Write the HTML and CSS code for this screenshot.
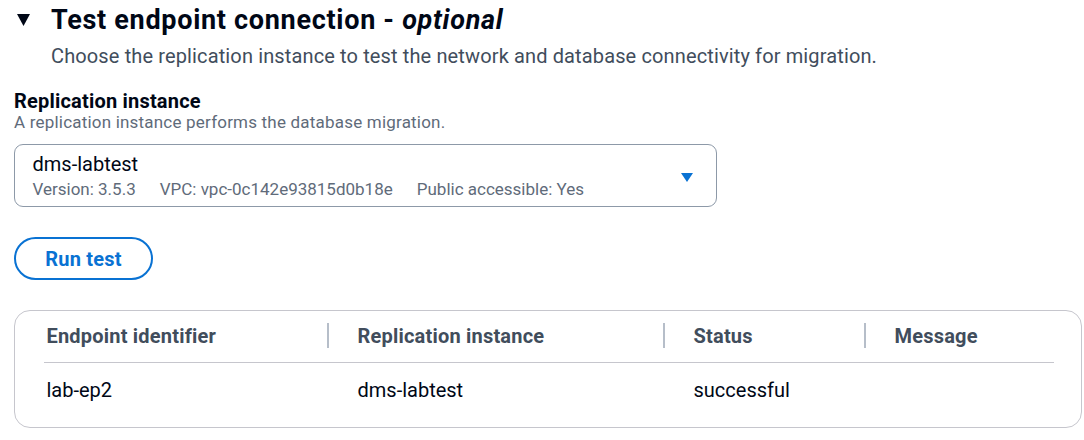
FILE: index.html
```html
<!DOCTYPE html>
<html lang="en">
<head>
<meta charset="utf-8">
<title>Test endpoint connection</title>
<link rel="stylesheet" href="styles.css">
</head>
<body>
<main class="page">
  <section class="section">
    <header class="section-header">
      <svg class="expand-caret" width="13" height="12" viewBox="0 0 13 12" aria-hidden="true"><polygon points="0,0 13,0 6.5,12" fill="#000716"/></svg>
      <h2 class="section-title">Test endpoint connection - <i>optional</i></h2>
    </header>
    <p class="section-desc">Choose the replication instance to test the network and database connectivity for migration.</p>

    <div class="field">
      <div class="field-label">Replication instance</div>
      <div class="field-help">A replication instance performs the database migration.</div>
      <div class="select">
        <div class="select-body">
          <div class="select-value">dms-labtest</div>
          <div class="select-meta">
            <span>Version: 3.5.3</span>
            <span>VPC: vpc-0c142e93815d0b18e</span>
            <span>Public accessible: Yes</span>
          </div>
        </div>
        <svg class="select-caret" width="12" height="9" viewBox="0 0 12 9" aria-hidden="true"><polygon points="0,0 12,0 6,9" fill="#0972d3"/></svg>
      </div>
    </div>

    <button class="btn" type="button">Run test</button>

    <div class="table">
      <div class="table-row table-head">
        <div class="cell">Endpoint identifier</div>
        <div class="cell sep">Replication instance</div>
        <div class="cell sep">Status</div>
        <div class="cell sep">Message</div>
      </div>
      <div class="table-row table-body">
        <div class="cell">lab-ep2</div>
        <div class="cell">dms-labtest</div>
        <div class="cell">successful</div>
        <div class="cell"></div>
      </div>
    </div>
  </section>
</main>
</body>
</html>
```

FILE: styles.css
```css
* { box-sizing: border-box; }

html, body {
  margin: 0;
  padding: 0;
  background: #ffffff;
}

body {
  font-family: Roboto, "Liberation Sans", Arial, sans-serif;
  color: #000716;
  width: 1084px;
  height: 440px;
  overflow: hidden;
}

.page {
  padding: 4px 2px 0 14px;
}

.section-header {
  display: flex;
  align-items: center;
  gap: 21px;
  height: 32px;
  padding-left: 3px;
}

.expand-caret {
  flex: none;
  margin-top: -1px;
}

.section-title {
  margin: 0;
  font-size: 27px;
  line-height: 32px;
  font-weight: 700;
  letter-spacing: 0.7px;
  color: #000716;
}

.section-title i {
  font-style: italic;
}

.section-desc {
  margin: 6px 0 0 37px;
  font-size: 20px;
  line-height: 28px;
  letter-spacing: 0.13px;
  color: #414d5c;
}

.field {
  margin-top: 20px;
}

.field-label {
  font-size: 20px;
  line-height: 22px;
  font-weight: 700;
  letter-spacing: 0.2px;
  color: #000716;
}

.field-help {
  font-size: 17px;
  line-height: 20px;
  letter-spacing: 0.2px;
  color: #5f6b7a;
}

.select {
  margin-top: 12px;
  width: 703px;
  height: 63px;
  border: 1.5px solid #8d99a8;
  border-radius: 9px;
  padding: 6.5px 23px 5.5px 17.5px;
  display: flex;
  align-items: center;
  justify-content: space-between;
}

.select-body {
  display: flex;
  flex-direction: column;
  gap: 2px;
}

.select-value {
  font-size: 20px;
  line-height: 24px;
  color: #000716;
}

.select-meta {
  display: flex;
  gap: 24px;
  font-size: 17px;
  line-height: 22px;
  color: #5f6b7a;
}

.select-caret {
  flex: none;
  margin-top: 2px;
}

.btn {
  display: flex;
  align-items: center;
  justify-content: center;
  margin-top: 30px;
  width: 139px;
  height: 43px;
  padding: 0;
  border: 2.5px solid #0972d3;
  border-radius: 22px;
  background: #ffffff;
  color: #0972d3;
  font-family: Roboto, "Liberation Sans", Arial, sans-serif;
  font-size: 20px;
  font-weight: 700;
  letter-spacing: 0.2px;
}

.table {
  margin-top: 30px;
  height: 118px;
  border: 1.5px solid #c6c6cd;
  border-radius: 16px;
  padding: 0 27.5px 0 28.5px;
}

.table-row {
  display: grid;
  grid-template-columns: 284px 336px 201px 1fr;
}

.table-head {
  padding: 12.5px 0 14px;
  border-bottom: 1.5px solid #c6c6cd;
  font-weight: 700;
  color: #414d5c;
  letter-spacing: 0.2px;
}

.table-body {
  padding: 15.5px 0 0;
  color: #000716;
}

.cell {
  position: relative;
  font-size: 20px;
  line-height: 24px;
  padding-left: 30px;
}

.cell:first-child {
  padding-left: 3px;
}

.cell.sep::before {
  content: "";
  position: absolute;
  left: -1px;
  top: -0.5px;
  width: 2px;
  height: 25px;
  background: #b6bec9;
}
```
